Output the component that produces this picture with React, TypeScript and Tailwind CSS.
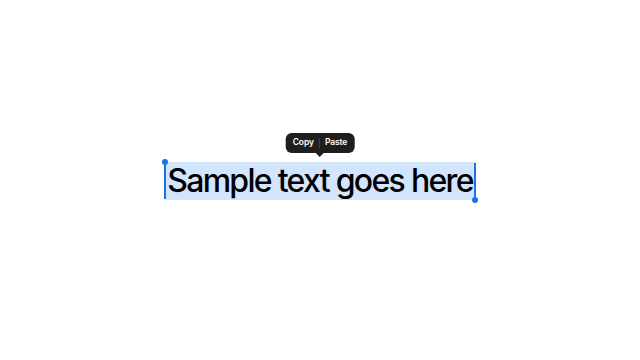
import React from 'react';

export default function App() {
  return (
    <div className="w-[640px] h-[360px] bg-white flex items-center justify-center" style={{ fontFamily: 'Inter, "Noto Sans", sans-serif' }}>
      <div className="relative mt-[1px]">
        {/* floating toolbar */}
        <div className="absolute left-1/2 -translate-x-1/2 -top-[29px] flex flex-col items-center">
          <div className="flex items-center h-[20px] px-[7px] rounded-[6px] bg-[#1e1e1e] text-white text-[8.5px] font-semibold leading-none tracking-[-0.1px]">
            <span>Copy</span>
            <span className="mx-[5px] w-px h-[10px] bg-[#4a4a4a]"></span>
            <span>Paste</span>
          </div>
          <div className="w-0 h-0 border-l-[4px] border-r-[4px] border-t-[4px] border-l-transparent border-r-transparent border-t-[#1e1e1e]"></div>
        </div>

        {/* selected text */}
        <div className="relative bg-[#d3e5fd] px-[2px] h-[38px] flex items-center">
          <span className="text-[32px] leading-none font-medium text-black tracking-[-1.7px]">Sample text goes here</span>
          {/* left handle */}
          <div className="absolute -left-px -top-[1px] bottom-[1px] w-[2px] bg-[#1a73e8]"></div>
          <div className="absolute -left-[3px] -top-[3px] w-[6px] h-[6px] rounded-full bg-[#1a73e8]"></div>
          {/* right handle */}
          <div className="absolute -right-px top-[1px] -bottom-[1px] w-[2px] bg-[#1a73e8]"></div>
          <div className="absolute -right-[3px] -bottom-[3px] w-[6px] h-[6px] rounded-full bg-[#1a73e8]"></div>
        </div>
      </div>
    </div>
  );
}
